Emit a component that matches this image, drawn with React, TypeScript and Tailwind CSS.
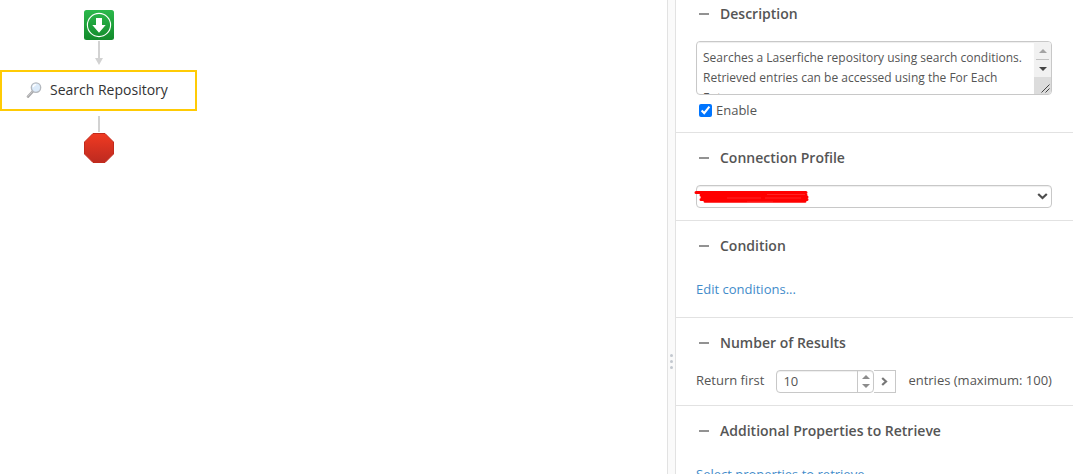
import { useState } from 'react';
import type { ReactNode } from 'react';

const DESCRIPTION =
  'Searches a Laserfiche repository using search conditions. Retrieved entries can be accessed using the For Each Entry';

function StartIcon() {
  return (
    <svg className="w-[30px] h-[30px] shrink-0" viewBox="0 0 30 30" aria-label="Start">
      <defs>
        <linearGradient id="start-fill" x1="0" y1="0" x2="0" y2="1">
          <stop offset="0" stopColor="#2bb84b" />
          <stop offset="1" stopColor="#128a2b" />
        </linearGradient>
      </defs>
      <rect width="30" height="30" rx="2.5" fill="url(#start-fill)" />
      <circle cx="15" cy="15" r="11.6" fill="none" stroke="#fff" strokeWidth="1.1" />
      <path d="M12 8h6v7h3.7L15 22.8 8.3 15H12z" fill="#fff" />
    </svg>
  );
}

function StopIcon() {
  return (
    <svg className="w-[30px] h-[30px] shrink-0" viewBox="0 0 30 30" aria-label="End">
      <defs>
        <linearGradient id="stop-fill" x1="0" y1="0" x2="0" y2="1">
          <stop offset="0" stopColor="#f03a22" />
          <stop offset="1" stopColor="#bd2a20" />
        </linearGradient>
      </defs>
      <path d="M9 .5h12L29.5 9v12L21 29.5H9L.5 21V9z" fill="url(#stop-fill)" stroke="#c22a1c" />
    </svg>
  );
}

function SearchIcon() {
  return (
    <svg className="w-4 h-4 shrink-0" viewBox="0 0 16 16" aria-hidden="true">
      <path d="M6.6 9.6 2 14.6" stroke="#a9a9ab" strokeWidth="2.6" strokeLinecap="round" />
      <path d="M6.2 9.6 1.8 14.2" stroke="#d0d0d2" strokeWidth="0.8" strokeLinecap="round" />
      <circle cx="10" cy="5.6" r="4.7" fill="#dcebfa" stroke="#b4b8be" strokeWidth="1.3" />
      <path d="M7.2 5.2a3 3 0 0 1 3-2.6" fill="none" stroke="#fff" strokeWidth="1.4" />
    </svg>
  );
}

function Section({ title, first, children }: { title: string; first?: boolean; children: ReactNode }) {
  const [open, setOpen] = useState(true);

  return (
    <section className={first ? 'pt-1 pl-5 pr-[21px]' : 'border-t border-[#e2e2e2] pt-[15px] pl-5 pr-[21px]'}>
      <h2>
        <button
          onClick={() => setOpen(!open)}
          aria-expanded={open}
          className="flex items-center gap-[11px] pl-[3px] h-5 text-sm leading-5 font-semibold text-[#555] whitespace-nowrap"
        >
          <span className="w-[10px] h-[2px] bg-[#929292]" />
          {title}
        </button>
      </h2>
      {open && children}
    </section>
  );
}

function DescriptionBox() {
  return (
    <div className="flex h-[54px] mt-[17px] border border-[#c8c8c8] rounded overflow-hidden">
      <textarea
        aria-label="Description"
        defaultValue={DESCRIPTION}
        className="flex-1 min-w-0 h-full px-[6px] pt-[6px] text-xs leading-5 text-[#555] resize-none overflow-hidden outline-none shadow-[inset_0_1px_1px_#eee]"
      />
      <div className="w-[17px] flex flex-col bg-[#f1f1f1]">
        <button aria-label="Scroll up" className="h-[18px] mx-[2px] flex items-center justify-center border-b border-[#c1c1c1]">
          <svg width="8" height="4" viewBox="0 0 8 4"><path d="M0 4 4 0l4 4z" fill="#a3a3a3" /></svg>
        </button>
        <button aria-label="Scroll down" className="h-[17px] flex items-center justify-center">
          <svg width="8" height="4" viewBox="0 0 8 4"><path d="M0 0h8L4 4z" fill="#444" /></svg>
        </button>
        <div className="flex-1 bg-[#dcdcdc] flex items-end justify-end p-px">
          <svg width="9" height="9" viewBox="0 0 9 9"><path d="M.5 8.5l8-8M4.5 8.5l4-4" stroke="#444" strokeWidth="1" /></svg>
        </div>
      </div>
    </div>
  );
}

function ProfileSelect() {
  return (
    <div className="relative mt-[17px] mb-3">
      <select
        aria-label="Connection Profile"
        className="block w-full h-[23px] appearance-none bg-white border border-[#c8c8c8] rounded px-2 text-[13px] outline-none shadow-[inset_0_1px_1px_#eee]"
      >
        <option />
      </select>
      <svg className="absolute right-[4px] top-[8px] pointer-events-none" width="11" height="7" viewBox="0 0 11 7">
        <path d="M1.2 1 5.5 5l4.3-4" fill="none" stroke="#4d4d4d" strokeWidth="2.2" />
      </svg>
      {/* Redacted profile name */}
      <svg className="absolute -left-[3px] top-[5px] pointer-events-none" width="118" height="14" viewBox="0 0 118 14">
        <path
          d="M3 2.6H113M8 5H113M9 7H114M8 9.5H114M12 11.3H112"
          fill="none"
          stroke="#f00"
          strokeWidth="3"
          strokeLinecap="round"
        />
        <path d="M74 4.5h38M34 8h34M72 8h36M54 12h26" stroke="#ff5a5a" strokeWidth="0.4" />
      </svg>
    </div>
  );
}

function ResultCount() {
  const [count, setCount] = useState('10');
  const step = (n: number) => setCount(String(Math.min(100, Math.max(1, Number(count) + n))));

  return (
    <div className="flex items-start mt-[17px] mb-3 h-[23px] text-[13px] leading-5 whitespace-nowrap">
      <label htmlFor="max-results">Return first</label>
      <div className="flex ml-3 w-[98px] h-[23px] border border-[#c8c8c8] rounded overflow-hidden shadow-[inset_0_1px_1px_#eee]">
        <input
          id="max-results"
          type="text"
          value={count}
          onChange={e => setCount(e.target.value)}
          className="flex-1 min-w-0 h-5 pl-[6px] outline-none"
        />
        <div className="w-4 flex flex-col items-center justify-center gap-[5px] border-l border-[#c8c8c8]">
          <button aria-label="Increase" onClick={() => step(1)}>
            <svg className="block" width="8" height="4" viewBox="0 0 8 4"><path d="M0 4 4 0l4 4z" fill="#8c8c8c" /></svg>
          </button>
          <button aria-label="Decrease" onClick={() => step(-1)}>
            <svg className="block" width="8" height="4" viewBox="0 0 8 4"><path d="M0 0h8L4 4z" fill="#8c8c8c" /></svg>
          </button>
        </div>
      </div>
      <button aria-label="Insert token" className="w-[22px] h-[23px] flex items-center justify-center border border-l-0 border-[#c8c8c8]">
        <svg width="7" height="9" viewBox="0 0 7 9"><path d="M1.2 1 5 4.5 1.2 8" fill="none" stroke="#777" strokeWidth="2.2" /></svg>
      </button>
      <span className="ml-3">entries (maximum: 100)</span>
    </div>
  );
}

export default function App() {
  const [enabled, setEnabled] = useState(true);

  return (
    <div className="flex h-screen overflow-hidden bg-white font-['Open_Sans',sans-serif] text-[#555]">
      {/* Workflow canvas */}
      <main className="flex-1 min-w-0">
        <div className="w-[198px] pt-[10px] flex flex-col items-center">
          <StartIcon />
          <svg className="mt-px" width="8" height="24" viewBox="0 0 8 24">
            <path d="M3 0h2v17h3L4 24 0 17h3z" fill="#d2d2d2" />
          </svg>
          <button className="self-start w-[197px] h-[41px] mt-[5px] pl-6 pb-px flex items-center gap-2 border-2 border-[#ffcb05] bg-white text-sm leading-5 text-[#333] whitespace-nowrap">
            <SearchIcon />
            Search Repository
          </button>
          <div className="w-[2px] h-4 mt-[5px] mb-px bg-[#d2d2d2]" />
          <StopIcon />
        </div>
      </main>

      {/* Splitter */}
      <div className="w-[9px] shrink-0 flex flex-col items-center justify-center gap-[3px] pt-[249px] border-x border-[#e2e2e2] bg-[#fafafa]">
        <span className="w-[3px] h-[3px] rounded-full bg-[#c3c8cf]" />
        <span className="w-[3px] h-[3px] rounded-full bg-[#c3c8cf]" />
        <span className="w-[3px] h-[3px] rounded-full bg-[#c3c8cf]" />
      </div>

      {/* Properties */}
      <aside className="w-[37%] shrink-0 overflow-hidden text-[13px] leading-5">
        <Section title="Description" first>
          <DescriptionBox />
          <div className="flex items-center gap-1 pl-[3px] mt-[5px] mb-3">
            <input
              id="enable"
              type="checkbox"
              checked={enabled}
              onChange={() => setEnabled(!enabled)}
              className="w-[13px] h-[13px] accent-[#0075ff]"
            />
            <label htmlFor="enable">Enable</label>
          </div>
        </Section>
        <Section title="Connection Profile">
          <ProfileSelect />
        </Section>
        <Section title="Condition">
          <a href="#conditions" className="block mt-[23px] mb-[18px] text-[#428bca]">Edit conditions...</a>
        </Section>
        <Section title="Number of Results">
          <ResultCount />
        </Section>
        <Section title="Additional Properties to Retrieve">
          <a href="#properties" className="block mt-[23px] mb-[18px] text-[#428bca]">Select properties to retrieve...</a>
        </Section>
      </aside>
    </div>
  );
}
